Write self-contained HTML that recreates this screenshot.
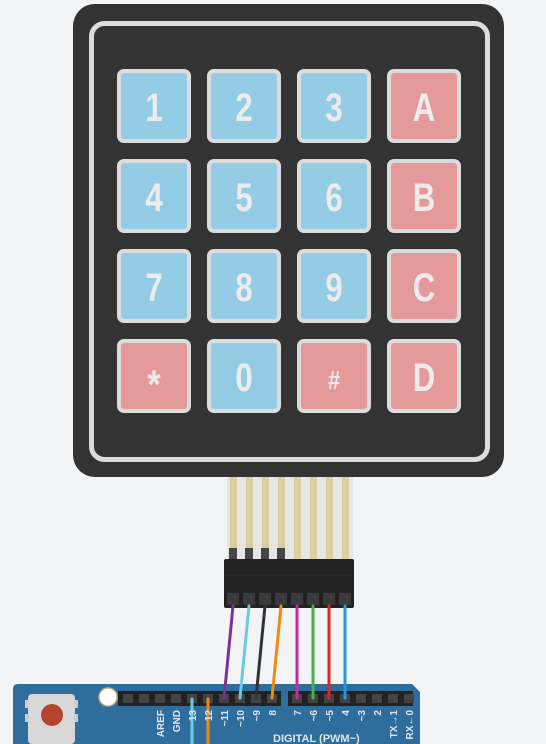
<!DOCTYPE html>
<html><head><style>
html,body{margin:0;padding:0;background:#f3f4f6;}
svg{display:block;}
text{font-family:"Liberation Sans",sans-serif;}
</style></head><body>
<svg width="546" height="744" viewBox="0 0 546 744" xmlns="http://www.w3.org/2000/svg">
<rect width="546" height="744" fill="#f3f4f6"/>
<rect x="73" y="4" width="431" height="473" rx="22" fill="#333333"/>
<rect x="91.5" y="23.5" width="396" height="436" rx="13" fill="none" stroke="#dcdcdc" stroke-width="5"/>
<g stroke="#dcdcdc" stroke-width="4">
<rect x="119" y="71" width="70" height="70" rx="5" fill="#94cbe5"/>
<rect x="209" y="71" width="70" height="70" rx="5" fill="#94cbe5"/>
<rect x="299" y="71" width="70" height="70" rx="5" fill="#94cbe5"/>
<rect x="389" y="71" width="70" height="70" rx="5" fill="#e49a9b"/>
<rect x="119" y="161" width="70" height="70" rx="5" fill="#94cbe5"/>
<rect x="209" y="161" width="70" height="70" rx="5" fill="#94cbe5"/>
<rect x="299" y="161" width="70" height="70" rx="5" fill="#94cbe5"/>
<rect x="389" y="161" width="70" height="70" rx="5" fill="#e49a9b"/>
<rect x="119" y="251" width="70" height="70" rx="5" fill="#94cbe5"/>
<rect x="209" y="251" width="70" height="70" rx="5" fill="#94cbe5"/>
<rect x="299" y="251" width="70" height="70" rx="5" fill="#94cbe5"/>
<rect x="389" y="251" width="70" height="70" rx="5" fill="#e49a9b"/>
<rect x="119" y="341" width="70" height="70" rx="5" fill="#e49a9b"/>
<rect x="209" y="341" width="70" height="70" rx="5" fill="#94cbe5"/>
<rect x="299" y="341" width="70" height="70" rx="5" fill="#e49a9b"/>
<rect x="389" y="341" width="70" height="70" rx="5" fill="#e49a9b"/>
</g>
<g font-weight="bold" font-size="40" fill="#ececec" text-anchor="middle">
<text transform="translate(154,121) scale(0.78,1)">1</text>
<text transform="translate(244,121) scale(0.78,1)">2</text>
<text transform="translate(334,121) scale(0.78,1)">3</text>
<text transform="translate(424,121) scale(0.78,1)">A</text>
<text transform="translate(154,211) scale(0.78,1)">4</text>
<text transform="translate(244,211) scale(0.78,1)">5</text>
<text transform="translate(334,211) scale(0.78,1)">6</text>
<text transform="translate(424,211) scale(0.78,1)">B</text>
<text transform="translate(154,301) scale(0.78,1)">7</text>
<text transform="translate(244,301) scale(0.78,1)">8</text>
<text transform="translate(334,301) scale(0.78,1)">9</text>
<text transform="translate(424,301) scale(0.78,1)">C</text>
<text transform="translate(154,398) scale(0.85,1)">*</text>
<text transform="translate(244,391) scale(0.78,1)">0</text>
<text transform="translate(334,389) scale(0.85,1)" font-size="26">#</text>
<text transform="translate(424,391) scale(0.78,1)">D</text>
</g>
<rect x="227" y="477" width="126" height="84" fill="#e6e6e6"/>
<g fill="#dccf9f">
<rect x="230" y="477" width="7" height="84"/><rect x="246" y="477" width="7" height="84"/>
<rect x="262" y="477" width="7" height="84"/><rect x="278" y="477" width="7" height="84"/>
<rect x="294" y="477" width="7" height="84"/><rect x="310" y="477" width="7" height="84"/>
<rect x="326" y="477" width="7" height="84"/><rect x="342" y="477" width="7" height="84"/>
</g>
<g fill="#444"><rect x="229" y="548" width="8" height="13"/><rect x="245" y="548" width="8" height="13"/><rect x="261" y="548" width="8" height="13"/><rect x="277" y="548" width="8" height="13"/></g>
<rect x="224" y="559" width="130" height="49" rx="2" fill="#222"/>
<line x1="225" y1="575" x2="353" y2="575" stroke="#333" stroke-width="1"/>
<g fill="#3a3a3a">
<rect x="227" y="593" width="12" height="12"/><rect x="243" y="593" width="12" height="12"/><rect x="259" y="593" width="12" height="12"/><rect x="275" y="593" width="12" height="12"/>
<rect x="291" y="593" width="12" height="12"/><rect x="307" y="593" width="12" height="12"/><rect x="323" y="593" width="12" height="12"/><rect x="339" y="593" width="12" height="12"/>
</g>
<path d="M18 684 H412 L420 692 V744 H13 V689 Q13 684 18 684Z" fill="#2f6d9d"/>
<rect x="118" y="691" width="163" height="15" fill="#222"/>
<rect x="288" y="691" width="125" height="15" fill="#222"/>
<g fill="#444">
<rect x="123" y="694" width="10" height="9"/><rect x="139" y="694" width="10" height="9"/><rect x="155" y="694" width="10" height="9"/><rect x="171" y="694" width="10" height="9"/><rect x="187" y="694" width="10" height="9"/><rect x="203" y="694" width="10" height="9"/><rect x="219" y="694" width="10" height="9"/><rect x="235" y="694" width="10" height="9"/><rect x="251" y="694" width="10" height="9"/><rect x="267" y="694" width="10" height="9"/>
<rect x="292" y="694" width="10" height="9"/><rect x="308" y="694" width="10" height="9"/><rect x="324" y="694" width="10" height="9"/><rect x="340" y="694" width="10" height="9"/><rect x="356" y="694" width="10" height="9"/><rect x="372" y="694" width="10" height="9"/><rect x="388" y="694" width="10" height="9"/><rect x="404" y="694" width="10" height="9"/>
</g>
<circle cx="108" cy="697" r="9" fill="#fff" stroke="#c8b27a" stroke-width="1.5"/>
<rect x="28" y="694" width="47" height="50" rx="4" fill="#d8d8d8"/>
<rect x="25" y="700" width="4" height="8" fill="#ccc"/><rect x="25" y="714" width="4" height="8" fill="#ccc"/><rect x="74" y="700" width="4" height="8" fill="#ccc"/><rect x="74" y="714" width="4" height="8" fill="#ccc"/>
<circle cx="52" cy="715" r="11" fill="#b5442c"/>
<g stroke-width="3" fill="none" stroke-linecap="round">
<line x1="233" y1="606" x2="224" y2="698" stroke="#7b3298"/>
<line x1="249" y1="606" x2="240" y2="698" stroke="#6ccbe0"/>
<line x1="265" y1="606" x2="256" y2="698" stroke="#333"/>
<line x1="281" y1="606" x2="272" y2="698" stroke="#f08a10"/>
<line x1="297" y1="606" x2="297" y2="698" stroke="#c9289a"/>
<line x1="313" y1="606" x2="313" y2="698" stroke="#43b349"/>
<line x1="329" y1="606" x2="329" y2="698" stroke="#e02428"/>
<line x1="345" y1="606" x2="345" y2="698" stroke="#1e9ad8"/>
<line x1="192" y1="699" x2="192" y2="746" stroke="#6ccbe0"/>
<line x1="208" y1="699" x2="208" y2="746" stroke="#f08a10"/>
</g>
<g fill="#dfe6ee" font-size="10" font-weight="bold" text-anchor="end">
<text transform="translate(164,710) rotate(-90)">AREF</text>
<text transform="translate(180,710) rotate(-90)">GND</text>
<text transform="translate(196,710) rotate(-90)">13</text>
<text transform="translate(212,710) rotate(-90)">12</text>
<text transform="translate(228,710) rotate(-90)">~11</text>
<text transform="translate(244,710) rotate(-90)">~10</text>
<text transform="translate(260,710) rotate(-90)">~9</text>
<text transform="translate(276,710) rotate(-90)">8</text>
<text transform="translate(301,710) rotate(-90)">7</text>
<text transform="translate(317,710) rotate(-90)">~6</text>
<text transform="translate(333,710) rotate(-90)">~5</text>
<text transform="translate(349,710) rotate(-90)">4</text>
<text transform="translate(365,710) rotate(-90)">~3</text>
<text transform="translate(381,710) rotate(-90)">2</text>
<text transform="translate(397,710) rotate(-90)">TX→1</text>
<text transform="translate(413,710) rotate(-90)">RX←0</text>
</g>
<text x="273" y="742" fill="#dfe6ee" font-size="11" font-weight="bold">DIGITAL (PWM~)</text>
</svg>
</body></html>
